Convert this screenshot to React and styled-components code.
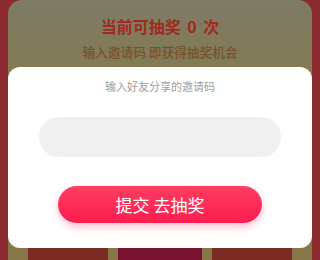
import React from 'react';
import styled, { createGlobalStyle } from 'styled-components';

const GlobalStyle = createGlobalStyle`
  html, body {
    margin: 0;
    padding: 0;
    width: 320px;
    height: 260px;
    overflow: hidden;
  }
  body {
    font-family: "Noto Sans CJK SC", "Noto Sans", sans-serif;
  }
`;

const Page = styled.div`
  position: relative;
  width: 320px;
  height: 260px;
  box-sizing: border-box;
  padding: 0 8px;
  background-color: #8b2a2f;
  overflow: hidden;
`;

const Board = styled.div`
  height: 100%;
  border-radius: 14px 14px 0 0;
  background: linear-gradient(180deg, #7e7b66 0%, #867a4c 40%, #887848 100%);
  display: flex;
  flex-direction: column;
  align-items: center;
  padding-top: 16px;
  box-sizing: border-box;
`;

const Title = styled.h1`
  margin: 0;
  font-size: 16px;
  line-height: 20px;
  font-weight: bold;
  word-spacing: 3px;
  color: #a3291d;
`;

const Subtitle = styled.div`
  margin-top: 8px;
  font-size: 12.7px;
  line-height: 16px;
  font-weight: 500;
  color: #74532a;
`;

const Prizes = styled.div`
  margin-top: auto;
  margin-bottom: -20px;
  display: grid;
  grid-template-columns: 80px 84px 80px;
  gap: 10px;
`;

const Prize = styled.div`
  height: 36px;
  border-radius: 4px;
  background: ${p => (p.active ? '#7a1232' : '#7c2c22')};
  border-top: 2px solid ${p => (p.active ? '#8a1838' : '#8e3a2c')};
`;

const Dialog = styled.div`
  position: absolute;
  top: 67px;
  left: 8px;
  width: 304px;
  height: 181px;
  box-sizing: border-box;
  background: #fff;
  border-radius: 12px;
  display: flex;
  flex-direction: column;
  align-items: center;
  padding-top: 12px;
`;

const Hint = styled.div`
  font-size: 11px;
  line-height: 14px;
  color: #9e9e9e;
`;

const CodeInput = styled.input`
  margin-top: 24px;
  width: 242px;
  height: 40px;
  box-sizing: border-box;
  border: none;
  outline: none;
  border-radius: 20px;
  background: #f0f0f0;
  padding: 0 16px;
  font-size: 14px;
  font-family: inherit;
`;

const SubmitButton = styled.button`
  margin-top: 29px;
  width: 204px;
  height: 37px;
  border: none;
  border-radius: 19px;
  background: linear-gradient(180deg, #ff3d63 0%, #fb1d4e 100%);
  box-shadow: 0 4px 8px rgba(255, 40, 80, 0.28);
  color: #fff;
  font-family: inherit;
  font-size: 17px;
  line-height: 37px;
  padding: 0;
  cursor: pointer;
`;

export default function App() {
  return (
    <>
      <GlobalStyle />
      <Page>
        <Board>
          <Title>当前可抽奖 0 次</Title>
          <Subtitle>输入邀请码 即获得抽奖机会</Subtitle>
          <Prizes>
            <Prize />
            <Prize active />
            <Prize />
          </Prizes>
        </Board>
        <Dialog>
          <Hint>输入好友分享的邀请码</Hint>
          <CodeInput />
          <SubmitButton>提交 去抽奖</SubmitButton>
        </Dialog>
      </Page>
    </>
  );
}
